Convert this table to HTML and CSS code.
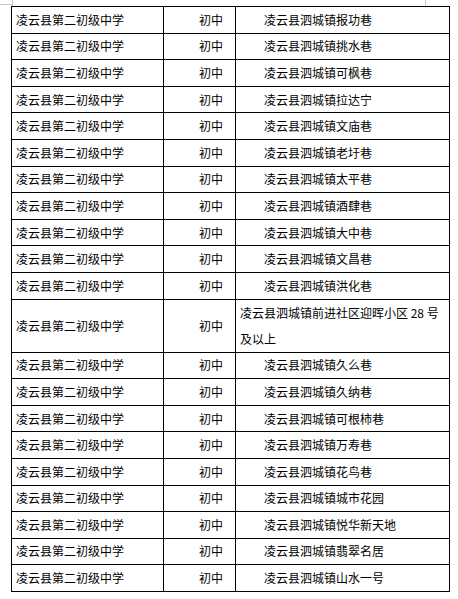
FILE: index.html
```html
<!DOCTYPE html>
<html lang="zh-CN">
<head>
<meta charset="utf-8">
<title>学区表</title>
<link rel="stylesheet" href="styles.css">
</head>
<body>
<div class="page">
  <span class="mark mark-lv"></span>
  <span class="mark mark-lh"></span>
  <span class="mark mark-rv"></span>
  <table class="list">
    <colgroup><col class="c1"><col class="c2"><col class="c3"></colgroup>
    <tbody>
      <tr><td class="school">凌云县第二初级中学</td><td class="level">初中</td><td class="addr">凌云县泗城镇报功巷</td></tr>
      <tr><td class="school">凌云县第二初级中学</td><td class="level">初中</td><td class="addr">凌云县泗城镇挑水巷</td></tr>
      <tr><td class="school">凌云县第二初级中学</td><td class="level">初中</td><td class="addr">凌云县泗城镇可枫巷</td></tr>
      <tr><td class="school">凌云县第二初级中学</td><td class="level">初中</td><td class="addr">凌云县泗城镇拉达宁</td></tr>
      <tr><td class="school">凌云县第二初级中学</td><td class="level">初中</td><td class="addr">凌云县泗城镇文庙巷</td></tr>
      <tr><td class="school">凌云县第二初级中学</td><td class="level">初中</td><td class="addr">凌云县泗城镇老圩巷</td></tr>
      <tr><td class="school">凌云县第二初级中学</td><td class="level">初中</td><td class="addr">凌云县泗城镇太平巷</td></tr>
      <tr><td class="school">凌云县第二初级中学</td><td class="level">初中</td><td class="addr">凌云县泗城镇酒肆巷</td></tr>
      <tr><td class="school">凌云县第二初级中学</td><td class="level">初中</td><td class="addr">凌云县泗城镇大中巷</td></tr>
      <tr><td class="school">凌云县第二初级中学</td><td class="level">初中</td><td class="addr">凌云县泗城镇文昌巷</td></tr>
      <tr><td class="school">凌云县第二初级中学</td><td class="level">初中</td><td class="addr">凌云县泗城镇洪化巷</td></tr>
      <tr class="tall"><td class="school">凌云县第二初级中学</td><td class="level">初中</td><td class="addr addr-wrap">凌云县泗城镇前进社区迎晖小区 28 号<br>及以上</td></tr>
      <tr><td class="school">凌云县第二初级中学</td><td class="level">初中</td><td class="addr">凌云县泗城镇久么巷</td></tr>
      <tr><td class="school">凌云县第二初级中学</td><td class="level">初中</td><td class="addr">凌云县泗城镇久纳巷</td></tr>
      <tr><td class="school">凌云县第二初级中学</td><td class="level">初中</td><td class="addr">凌云县泗城镇可根柿巷</td></tr>
      <tr><td class="school">凌云县第二初级中学</td><td class="level">初中</td><td class="addr">凌云县泗城镇万寿巷</td></tr>
      <tr><td class="school">凌云县第二初级中学</td><td class="level">初中</td><td class="addr">凌云县泗城镇花鸟巷</td></tr>
      <tr><td class="school">凌云县第二初级中学</td><td class="level">初中</td><td class="addr">凌云县泗城镇城市花园</td></tr>
      <tr><td class="school">凌云县第二初级中学</td><td class="level">初中</td><td class="addr">凌云县泗城镇悦华新天地</td></tr>
      <tr><td class="school">凌云县第二初级中学</td><td class="level">初中</td><td class="addr">凌云县泗城镇翡翠名居</td></tr>
      <tr><td class="school">凌云县第二初级中学</td><td class="level">初中</td><td class="addr">凌云县泗城镇山水一号</td></tr>
    </tbody>
  </table>
</div>
</body>
</html>
```
FILE: styles.css
```css
html, body {
  margin: 0;
  padding: 0;
  background: #ffffff;
}
.page {
  position: relative;
  padding: 6px 0 0 11px;
  font-family: "Noto Sans CJK SC", "Liberation Sans", sans-serif;
  font-size: 12px;
  color: #000000;
}
.mark {
  position: absolute;
  background: #c8c8c8;
}
.mark-lv { left: 12px; top: 0; width: 1px; height: 6px; }
.mark-lh { left: 0; top: 4px; width: 12px; height: 1px; }
.mark-rv { left: 425px; top: 0; width: 1px; height: 6px; }
.list {
  border-collapse: collapse;
  table-layout: fixed;
  width: 438px;
}
.c1 { width: 152px; }
.c2 { width: 72px; }
.c3 { width: 214px; }
.list td {
  border: 1px solid #000000;
  height: 25.6px;
  padding: 0;
  vertical-align: middle;
  line-height: 16px;
  white-space: nowrap;
}
.list .tall td {
  height: 52px;
}
.school { padding-left: 4px !important; }
.level { padding-left: 35px !important; }
.addr { padding-left: 28px !important; }
.addr-wrap {
  padding-left: 4px !important;
  line-height: 26px !important;
}
```
